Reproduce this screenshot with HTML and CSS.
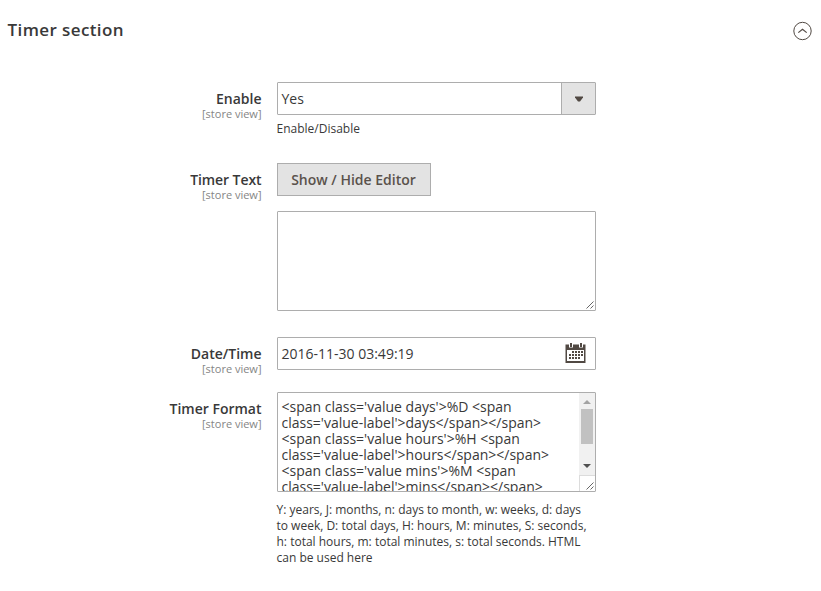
FILE: index.html
```html
<!DOCTYPE html>
<html lang="en">
<head>
<meta charset="utf-8">
<title>Timer section</title>
<link rel="stylesheet" href="styles.css">
</head>
<body>
<header class="section-head">
  <h1 class="section-title">Timer section</h1>
  <svg class="collapse" width="20" height="20" viewBox="0 0 20 20" fill="none" stroke="#514943">
    <circle cx="10.500" cy="10" r="8.700" stroke-width="1"/>
    <path d="M6.300 11.600 10.500 8.200l4.200 3.400" stroke-width="1.200"/>
  </svg>
</header>
<main class="fields">
  <div class="field field-enable">
    <div class="label"><span class="name">Enable</span><span class="scope">[store view]</span></div>
    <div class="control">
      <div class="box select"><span class="value">Yes</span><span class="select-arrow"><svg width="8" height="6" viewBox="0 0 8 6"><path d="M0 .5h8v1L5 5.500H3L0 1.500z" fill="#514943"/></svg></span></div>
      <p class="note">Enable/Disable</p>
    </div>
  </div>
  <div class="field field-text">
    <div class="label"><span class="name name-text">Timer Text</span><span class="scope">[store view]</span></div>
    <div class="control">
      <button class="button" type="button">Show / Hide Editor</button>
      <div class="box area">
        <svg class="grip" width="10" height="10" viewBox="0 0 10 10"><path d="M1.500 8.500l7-7M5.500 8.500l3-3" stroke="#666" fill="none"/></svg>
      </div>
    </div>
  </div>
  <div class="field field-date">
    <div class="label"><span class="name">Date/Time</span><span class="scope">[store view]</span></div>
    <div class="control">
      <div class="box date"><span class="value">2016-11-30 03:49:19</span>
        <svg class="calendar" width="21" height="20" viewBox="0 0 21 20">
          <path d="M.5 1.500h20V20H.5zM2 7v11h17V7z" fill="#514943" fill-rule="evenodd"/>
          <path d="M4 0h4v4.500H4zM14 0h4v4.500h-4z" fill="#fff"/>
          <path d="M5 0h2v4H5zM15 0h2v4h-2z" fill="#514943"/>
          <path d="M7 9h11M4 12h14M4 15h11" stroke="#514943" stroke-width="2" stroke-dasharray="2 1" fill="none"/>
        </svg>
      </div>
    </div>
  </div>
  <div class="field">
    <div class="label"><span class="name">Timer Format</span><span class="scope">[store view]</span></div>
    <div class="control">
      <div class="box area code">
        <div class="code-text">&lt;span class='value days'&gt;%D &lt;span<br>class='value-label'&gt;days&lt;/span&gt;&lt;/span&gt;<br>&lt;span class='value hours'&gt;%H &lt;span<br>class='value-label'&gt;hours&lt;/span&gt;&lt;/span&gt;<br>&lt;span class='value mins'&gt;%M &lt;span<br>class='value-label'&gt;mins&lt;/span&gt;&lt;/span&gt;</div>
        <div class="scroll">
          <div class="track">
            <svg width="8" height="4" viewBox="0 0 8 4"><path d="M0 4 4 0l4 4z" fill="#a3a3a3"/></svg>
            <div class="thumb"></div>
            <svg class="down" width="8" height="4" viewBox="0 0 8 4"><path d="M0 0h8L4 4z" fill="#505050"/></svg>
          </div>
          <div class="corner"></div>
        </div>
        <svg class="grip" width="10" height="10" viewBox="0 0 10 10"><path d="M1.500 8.500l7-7M5.500 8.500l3-3" stroke="#666" fill="none"/></svg>
      </div>
      <p class="note note-long">Y: years, J: months, n: days to month, w: weeks, d: days<br>to week, D: total days, H: hours, M: minutes, S: seconds,<br>h: total hours, m: total minutes, s: total seconds. HTML<br>can be used here</p>
    </div>
  </div>
</main>
</body>
</html>
```
FILE: styles.css
```css
* { box-sizing: border-box; }
body {
  margin: 0;
  background: #fff;
  color: #393939;
  font-family: "Open Sans", sans-serif;
  font-size: 14px;
}
.section-head {
  display: flex;
  justify-content: space-between;
  align-items: flex-start;
  height: 82px;
  padding: 18px 9px 0 7.5px;
}
.section-title {
  margin: 0;
  font-size: 17px;
  line-height: 23px;
  font-weight: 600;
  letter-spacing: .4px;
}
.collapse { margin-top: 3px; }
.field {
  display: grid;
  grid-template-columns: 261.5px 319px;
  column-gap: 15.5px;
  align-items: start;
}
.field-enable { height: 81px; }
.field-text { height: 174px; }
.field-date { height: 55px; }
.label {
  display: flex;
  flex-direction: column;
  align-items: flex-end;
  padding-top: 7px;
  white-space: nowrap;
}
.name { font-weight: 600; line-height: 19px; }
.name-text { letter-spacing: -.08px; }
.scope { color: #858585; font-size: 11px; line-height: 12px; }
.box {
  position: relative;
  border: 1px solid #adadad;
  border-radius: 1px;
  background: #fff;
  white-space: nowrap;
}
.select, .date {
  display: flex;
  justify-content: space-between;
  align-items: center;
  height: 33px;
  padding-left: 3.5px;
}
.select-arrow {
  display: flex;
  align-items: center;
  justify-content: center;
  width: 34px;
  height: 31px;
  border-left: 1px solid #adadad;
  background: #e3e3e3;
}
.note {
  margin: 6px 0 0 -.5px;
  font-size: 12px;
  line-height: 16px;
  white-space: nowrap;
}
.button {
  display: block;
  width: 154px;
  height: 33px;
  margin: 0 0 15px;
  padding: 0 1px 0 0;
  border: 1px solid #adadad;
  border-radius: 0;
  background: #e3e3e3;
  color: #5a524c;
  font: 600 14px/19px "Open Sans", sans-serif;
}
.area { height: 100px; }
.grip { position: absolute; right: 0; bottom: 0; }
.calendar { margin: -1px 9px 0 0; }
.code {
  display: flex;
  justify-content: space-between;
  overflow: hidden;
}
.code-text { padding: 6px 0 0 3.5px; line-height: 16px; }
.scroll { display: flex; flex-direction: column; width: 16px; }
.track {
  display: flex;
  flex-direction: column;
  align-items: center;
  height: 82px;
  padding-top: 7px;
  background: #f1f1f1;
}
.thumb { width: 12px; height: 35px; margin-top: 5px; background: #c1c1c1; }
.down { margin-top: 20px; }
.corner { flex: 1; border: 1px solid #dcdcdc; border-width: 1px 0 0 1px; background: #fff; }
.note-long { margin-top: 10px; }
```
